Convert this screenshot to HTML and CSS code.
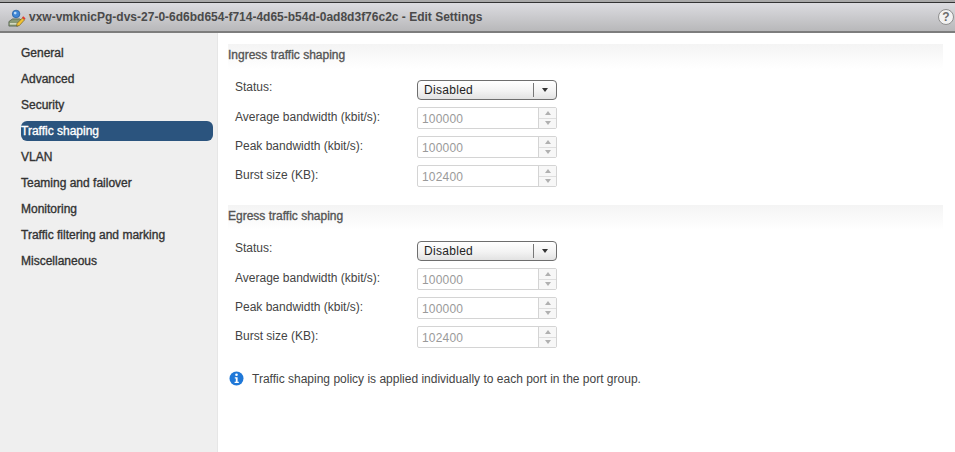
FILE: index.html
```html
<!DOCTYPE html>
<html lang="en">
<head>
<meta charset="utf-8">
<title>Edit Settings</title>
<link rel="stylesheet" href="styles.css">
</head>
<body>
<div class="app">
  <div class="topstrip"></div>
  <header class="titlebar">
    <svg class="pg-icon" width="18" height="18" viewBox="0 0 20 20">
      <circle cx="9" cy="5.5" r="4.2" fill="#3f86d6" stroke="#1d5a9e" stroke-width="0.8"/>
      <circle cx="8" cy="4.5" r="1.5" fill="#bcdcf6"/>
      <path d="M1 14 L5 11 H13 L15 12.5 L11 19 H1 Z" fill="#8a9a76" stroke="#4c5a48" stroke-width="0.8"/>
      <path d="M2 16.5 H10" stroke="#e8ecd8" stroke-width="1.4"/>
      <path d="M10 16 L16 10 L18.5 12 L12.5 18.5 L9.5 19 Z" fill="#f1c232" stroke="#6b5a20" stroke-width="0.7"/>
      <path d="M15.5 9.5 L17 8 L19.5 10.5 L18 12 Z" fill="#e03c31"/>
    </svg>
    <span class="title">vxw-vmknicPg-dvs-27-0-6d6bd654-f714-4d65-b54d-0ad8d3f76c2c - Edit Settings</span>
    <span class="help">?</span>
  </header>
  <div class="body">
    <nav class="sidebar">
      <a class="nav-item">General</a>
      <a class="nav-item">Advanced</a>
      <a class="nav-item">Security</a>
      <a class="nav-item active">Traffic shaping</a>
      <a class="nav-item">VLAN</a>
      <a class="nav-item">Teaming and failover</a>
      <a class="nav-item">Monitoring</a>
      <a class="nav-item">Traffic filtering and marking</a>
      <a class="nav-item">Miscellaneous</a>
    </nav>
    <main class="content">
      <section class="section">
        <h2 class="section-title">Ingress traffic shaping</h2>
        <div class="form">
          <label class="label label-status">Status:</label>
          <div class="select"><span class="select-value">Disabled</span><span class="select-btn"><i class="arrow-down dark"></i></span></div>
          <label class="label">Average bandwidth (kbit/s):</label>
          <div class="spinner"><span class="spinner-value">100000</span><span class="spin"><span class="spin-btn"><i class="arrow-up"></i></span><span class="spin-btn"><i class="arrow-down"></i></span></span></div>
          <label class="label">Peak bandwidth (kbit/s):</label>
          <div class="spinner"><span class="spinner-value">100000</span><span class="spin"><span class="spin-btn"><i class="arrow-up"></i></span><span class="spin-btn"><i class="arrow-down"></i></span></span></div>
          <label class="label">Burst size (KB):</label>
          <div class="spinner"><span class="spinner-value">102400</span><span class="spin"><span class="spin-btn"><i class="arrow-up"></i></span><span class="spin-btn"><i class="arrow-down"></i></span></span></div>
        </div>
      </section>
      <section class="section second">
        <h2 class="section-title">Egress traffic shaping</h2>
        <div class="form">
          <label class="label label-status">Status:</label>
          <div class="select"><span class="select-value">Disabled</span><span class="select-btn"><i class="arrow-down dark"></i></span></div>
          <label class="label">Average bandwidth (kbit/s):</label>
          <div class="spinner"><span class="spinner-value">100000</span><span class="spin"><span class="spin-btn"><i class="arrow-up"></i></span><span class="spin-btn"><i class="arrow-down"></i></span></span></div>
          <label class="label">Peak bandwidth (kbit/s):</label>
          <div class="spinner"><span class="spinner-value">100000</span><span class="spin"><span class="spin-btn"><i class="arrow-up"></i></span><span class="spin-btn"><i class="arrow-down"></i></span></span></div>
          <label class="label">Burst size (KB):</label>
          <div class="spinner"><span class="spinner-value">102400</span><span class="spin"><span class="spin-btn"><i class="arrow-up"></i></span><span class="spin-btn"><i class="arrow-down"></i></span></span></div>
        </div>
      </section>
      <div class="note">
        <svg class="info" width="15" height="15" viewBox="0 0 15 15">
          <circle cx="7.5" cy="7.5" r="7" fill="#1f78d8"/>
          <circle cx="7.5" cy="3.8" r="1.3" fill="#fff"/>
          <path d="M5.8 6.2 H8.6 V10.8 H9.8 V12 H5.6 V10.8 H6.8 V7.4 H5.8 Z" fill="#fff"/>
        </svg>
        <span>Traffic shaping policy is applied individually to each port in the port group.</span>
      </div>
    </main>
  </div>
</div>
</body>
</html>
```

FILE: styles.css
```css
* { box-sizing: border-box; }
html, body { margin: 0; padding: 0; height: 100%; background: #fff; overflow: hidden; }
body { font-family: "Liberation Sans", Arial, sans-serif; font-size: 12px; color: #333; }

.app { width: 955px; height: 452px; display: flex; flex-direction: column; }
.topstrip { height: 3px; background: #a9a9a9; border-bottom: 1px solid #333; flex: none; }

.titlebar {
  height: 30px; flex: none; display: flex; align-items: center; padding-left: 8px;
  background: linear-gradient(#dcdce0, #b8b8ba);
  border-bottom: 2px solid #7d7d7d;
}
.pg-icon { flex: none; margin-top: 2px; }
.title { margin-left: 3px; font-weight: bold; font-size: 12px; color: #4a4a4a; white-space: nowrap; }
.help {
  margin-left: auto; margin-right: 1px; width: 16px; height: 16px; border-radius: 50%;
  background: #f2f2f2; border: 1px solid #8f8f8f; color: #6c6c6c;
  font-weight: bold; font-size: 12px; line-height: 14px; text-align: center;
}

.body { flex: 1; display: flex; min-height: 0; }
.sidebar {
  width: 218px; flex: none; background: #efefef; border-right: 1px solid #e6e6e6;
  padding: 10px 4px 0 21px; display: flex; flex-direction: column; gap: 6px;
}
.nav-item {
  height: 20px; line-height: 20px; font-size: 12px; color: #333; border-radius: 6px; white-space: nowrap;
  -webkit-text-stroke: 0.35px currentColor;
}
.nav-item.active { background: #2b547e; color: #fff; }

.content { flex: 1; padding: 11px 12px 0 10px; min-width: 0; }
.section-title {
  margin: 0; height: 25px; line-height: 23px; font-size: 12px; font-weight: normal; color: #555;
  -webkit-text-stroke: 0.35px currentColor;
  background: linear-gradient(#f4f4f4, #fff);
}
.section.second { margin-top: 18px; }
.form {
  margin-top: 11px; padding-left: 7px; display: grid; grid-template-columns: 182px 140px; row-gap: 7px;
}
.label { height: 22px; padding-top: 3px; line-height: 15px; color: #444; font-size: 12px; white-space: nowrap; }
.label-status { height: 20px; padding-top: 0; line-height: 15px; }

.select {
  height: 20px; display: flex; border: 1px solid #6e6e6e; border-radius: 4px;
  background: linear-gradient(#ffffff, #f3f3f3 55%, #e2e2e2);
}
.select-value { flex: 1; padding-left: 6px; line-height: 18px; font-size: 12px; color: #222; letter-spacing: 0.3px; }
.select-btn { width: 23px; margin: 2px 0; border-left: 1px solid #777; display: flex; align-items: center; justify-content: center; }

.spinner { height: 22px; display: flex; border: 1px solid #d4d4d4; border-radius: 2px; background: #fff; }
.spinner-value { flex: 1; padding: 3px 0 0 4px; line-height: 16px; color: #9a9a9a; font-size: 12px; letter-spacing: 0.2px; }
.spin { width: 18px; flex: none; display: flex; flex-direction: column; border-left: 1px solid #d4d4d4; }
.spin-btn { flex: 1; display: flex; align-items: center; justify-content: center; background: #f7f7f7; }
.spin-btn + .spin-btn { border-top: 1px solid #dedede; }

.arrow-up, .arrow-down { display: block; width: 0; height: 0; border-left: 3.5px solid transparent; border-right: 3.5px solid transparent; }
.arrow-up { border-bottom: 4px solid #b0b0b0; }
.arrow-down { border-top: 4px solid #b0b0b0; }
.arrow-down.dark { border-top-color: #333; }

.note { margin-top: 23px; display: flex; align-items: center; gap: 8px; padding-left: 1px; font-size: 12px; color: #444; white-space: nowrap; }
.info { flex: none; }
```
